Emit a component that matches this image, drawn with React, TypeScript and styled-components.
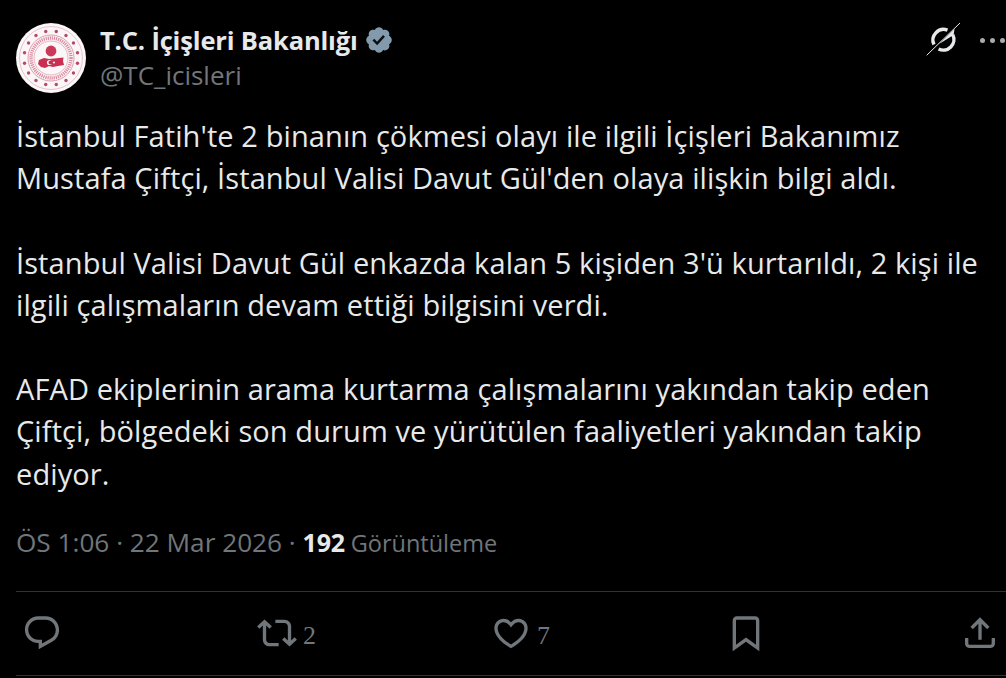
import React from "react";
import styled, { createGlobalStyle } from "styled-components";

const Global = createGlobalStyle`
  html, body { margin: 0; padding: 0; background: #000; }
  body { width: 1006px; height: 678px; overflow: hidden; }
`;

const Page = styled.main`
  width: 1006px;
  height: 678px;
  background: #000;
  overflow: hidden;
  padding: 23px 0 0 16px;
  box-sizing: border-box;
  font-family: "Open Sans", "Liberation Sans", sans-serif;
`;

const Header = styled.header`
  display: flex;
  align-items: flex-start;
  height: 70px;
`;

const Avatar = styled.div`
  width: 70px;
  height: 70px;
  flex: none;
  margin-right: 14px;
  svg { display: block; }
`;

const Identity = styled.div`
  display: flex;
  flex-direction: column;
  flex: 1;
`;

const NameRow = styled.div`
  display: flex;
  align-items: center;
  gap: 6px;
  height: 34px;
`;

const Name = styled.span`
  font-size: 25.5px;
  font-weight: 700;
  color: #e7e9ea;
  letter-spacing: -0.16px;
`;

const Handle = styled.span`
  font-size: 26px;
  line-height: 36px;
  color: #71767b;
`;

const HeaderActions = styled.div`
  display: flex;
  align-items: center;
  gap: 20px;
  height: 34px;
  margin-right: 1px;
  svg { display: block; }
`;

const Dots = styled.div`
  display: flex;
  gap: 5px;
`;

const Dot = styled.span`
  width: 5px;
  height: 5px;
  border-radius: 50%;
  background: #a8acaf;
`;

const Body = styled.div`
  margin-top: 22px;
  font-size: 29px;
  line-height: 42.2px;
  letter-spacing: 0.1px;
  color: #e7e9ea;
  white-space: pre;
`;

const Meta = styled.div`
  margin-top: 29px;
  height: 36px;
  line-height: 36px;
  font-size: 26.2px;
  color: #71767b;
  white-space: pre;
`;

const Strong = styled.span`
  font-size: 25px;
  font-weight: 700;
  color: #e7e9ea;
  letter-spacing: -0.2px;
`;

const Views = styled.span`
  font-size: 23.5px;
  margin-left: -1px;
`;

const ActionBar = styled.div`
  margin-top: 31px;
  height: 83px;
  padding-left: 6px;
  border-top: 1px solid #2f3336;
  border-bottom: 1px solid #2f3336;
  display: flex;
  align-items: center;
  justify-content: flex-start;
`;

const Action = styled.div<{ $w: number }>`
  width: ${(p) => p.$w}px;
  flex: none;
  display: flex;
  align-items: center;
  gap: 6px;
  color: #71767b;
  svg { display: block; flex: none; }
`;

const Count = styled.span`
  font-family: "Liberation Serif", serif;
  font-size: 26px;
  line-height: 24px;
  margin-top: 6px;
`;

const Seal = () => {
  const dots = Array.from({ length: 16 }, (_, i) => {
    const a = ((i + 0.5) / 16) * Math.PI * 2;
    return <circle key={i} cx={35 + 27 * Math.cos(a)} cy={35 + 27 * Math.sin(a)} r="1.7" fill="#b84a66" />;
  });
  return (
    <svg width="70" height="70" viewBox="0 0 70 70">
      <circle cx="35" cy="35" r="35" fill="#fbf6f7" />
      <circle cx="35" cy="35" r="31.5" fill="none" stroke="#e9c3cd" strokeWidth="1" />
      {dots}
      <circle cx="35" cy="35" r="23" fill="none" stroke="#d68a9c" strokeWidth="0.8" />
      <circle cx="35" cy="35" r="20" fill="none" stroke="#c9607a" strokeWidth="3.4" strokeDasharray="1.2 0.9" opacity="0.7" />
      <circle cx="35" cy="35" r="17" fill="#fbf6f7" stroke="#d68a9c" strokeWidth="0.6" />
      <circle cx="35" cy="28" r="5.4" fill="#c93a58" />
      <path d="M23 37 L28 35 L33 36 L38 35.5 L43 35 L47.5 34.5 L47 38 L48 42 L42 43 L37 44 L33 43 L29 45 L25 44 L22 41 Z" fill="#c82f50" />
      <circle cx="33.5" cy="39.5" r="2.6" fill="#fbf6f7" />
      <circle cx="34.5" cy="39.5" r="2" fill="#c82f50" />
      <circle cx="38" cy="39.5" r="1" fill="#fbf6f7" />
    </svg>
  );
};

const Badge = () => (
  <svg width="30" height="30" viewBox="0 0 22 22">
    <path fill="#829aab" d="M20.396 11c-.018-.646-.215-1.275-.57-1.816-.354-.54-.852-.972-1.438-1.246.223-.607.27-1.264.14-1.897-.131-.634-.437-1.218-.882-1.687-.47-.445-1.053-.75-1.687-.882-.633-.13-1.29-.083-1.897.14-.273-.587-.704-1.086-1.245-1.44S11.647 1.62 11 1.604c-.646.017-1.273.213-1.813.568s-.969.854-1.24 1.44c-.608-.223-1.267-.272-1.902-.14-.635.13-1.22.436-1.69.882-.445.47-.749 1.055-.878 1.688-.13.633-.08 1.29.144 1.896-.587.274-1.087.705-1.443 1.245-.356.54-.555 1.17-.574 1.817.02.647.218 1.276.574 1.817.356.54.856.972 1.443 1.245-.224.606-.274 1.263-.144 1.896.13.634.433 1.218.877 1.688.47.443 1.054.747 1.687.878.633.132 1.29.084 1.897-.136.274.586.705 1.084 1.246 1.439.54.354 1.17.551 1.816.569.647-.016 1.276-.213 1.817-.567s.972-.854 1.245-1.44c.604.239 1.266.296 1.903.164.636-.132 1.22-.447 1.68-.907.46-.46.776-1.044.908-1.681s.075-1.299-.165-1.903c.586-.274 1.084-.705 1.439-1.246.354-.54.551-1.17.569-1.816z" />
    <path fill="#0b0f14" d="M9.662 14.85l-3.429-3.428 1.293-1.302 2.072 2.072 4.4-4.794 1.347 1.246z" />
  </svg>
);

const GrokIcon = () => (
  <svg width="34" height="34" viewBox="0 0 34 34" fill="none">
    <path d="M1 32 L34 0" stroke="#e7e9ea" strokeWidth="1" strokeLinecap="round" />
    <path d="M21.5 7.2 A10.6 10.6 0 0 0 8 21.6" stroke="#e7e9ea" strokeWidth="3.4" />
    <path d="M26.8 11.8 A10.6 10.6 0 0 1 12.6 26" stroke="#e7e9ea" strokeWidth="3.4" />
    <path d="M13 21 L28.5 6 L27.6 12 Z" fill="#e7e9ea" />
  </svg>
);

const Reply = () => (
  <svg width="40" height="40" viewBox="0 0 24 24" fill="currentColor">
    <path d="M1.751 10c0-4.42 3.584-8 8.005-8h4.366c4.49 0 8.129 3.64 8.129 8.13 0 2.96-1.607 5.68-4.196 7.11l-8.054 4.46v-3.69h-.067c-4.49.1-8.183-3.51-8.183-8.01zm8.005-6c-3.317 0-6.005 2.69-6.005 6 0 3.37 2.77 6.08 6.138 6.01l.351-.01h1.761v2.3l5.087-2.81c1.951-1.08 3.163-3.13 3.163-5.36 0-3.39-2.744-6.13-6.129-6.13H9.756z" />
  </svg>
);

const Repost = () => (
  <svg width="40" height="40" viewBox="0 0 24 24" fill="currentColor">
    <path d="M4.5 3.88l4.432 4.14-1.364 1.46L5.5 7.55V16c0 1.1.896 2 2 2H13v2H7.5c-2.209 0-4-1.79-4-4V7.55L1.432 9.48.068 8.02 4.5 3.88zM16.5 6H11V4h5.5c2.209 0 4 1.79 4 4v8.45l2.068-1.93 1.364 1.46-4.432 4.14-4.432-4.14 1.364-1.46 2.068 1.93V8c0-1.1-.896-2-2-2z" />
  </svg>
);

const Heart = () => (
  <svg width="40" height="40" viewBox="0 0 24 24" fill="currentColor">
    <path d="M16.697 5.5c-1.222-.06-2.679.51-3.89 2.16l-.805 1.09-.806-1.09C9.984 6.01 8.526 5.44 7.304 5.5c-1.243.07-2.349.78-2.91 1.91-.552 1.12-.633 2.78.479 4.82 1.074 1.97 3.257 4.27 7.129 6.61 3.87-2.34 6.052-4.64 7.126-6.61 1.111-2.04 1.03-3.7.477-4.82-.561-1.13-1.666-1.84-2.908-1.91zm4.187 7.69c-1.351 2.48-4.001 5.12-8.379 7.67l-.503.3-.504-.3c-4.379-2.55-7.029-5.19-8.382-7.67-1.36-2.5-1.41-4.86-.514-6.67.887-1.79 2.647-2.91 4.601-3.01 1.651-.09 3.368.56 4.798 2.01 1.429-1.45 3.146-2.1 4.796-2.01 1.954.1 3.714 1.22 4.601 3.01.896 1.81.846 4.17-.514 6.67z" />
  </svg>
);

const Bookmark = () => (
  <svg width="40" height="40" viewBox="0 0 24 24" fill="currentColor">
    <path d="M4 4.5C4 3.12 5.119 2 6.5 2h11C18.881 2 20 3.12 20 4.5v18.44l-8-5.71-8 5.71V4.5zM6.5 4c-.276 0-.5.22-.5.5v14.56l6-4.29 6 4.29V4.5c0-.28-.224-.5-.5-.5h-11z" />
  </svg>
);

const Share = () => (
  <svg width="40" height="40" viewBox="0 0 24 24" fill="currentColor">
    <path d="M12 2.59l5.7 5.7-1.41 1.42L13 6.41V16h-2V6.41l-3.3 3.3-1.41-1.42L12 2.59zM21 15l-.02 3.51c0 1.38-1.12 2.49-2.5 2.49H5.5C4.11 21 3 19.88 3 18.5V15h2v3.5c0 .28.22.5.5.5h12.98c.28 0 .5-.22.5-.5L19 15h2z" />
  </svg>
);

const text = `İstanbul Fatih'te 2 binanın çökmesi olayı ile ilgili İçişleri Bakanımız
Mustafa Çiftçi, İstanbul Valisi Davut Gül'den olaya ilişkin bilgi aldı.

İstanbul Valisi Davut Gül enkazda kalan 5 kişiden 3'ü kurtarıldı, 2 kişi ile
ilgili çalışmaların devam ettiği bilgisini verdi.

AFAD ekiplerinin arama kurtarma çalışmalarını yakından takip eden
Çiftçi, bölgedeki son durum ve yürütülen faaliyetleri yakından takip
ediyor.`;

export default function App() {
  return (
    <Page>
      <Global />
      <Header>
        <Avatar><Seal /></Avatar>
        <Identity>
          <NameRow>
            <Name>T.C. İçişleri Bakanlığı</Name>
            <Badge />
          </NameRow>
          <Handle>@TC_icisleri</Handle>
        </Identity>
        <HeaderActions>
          <GrokIcon />
          <Dots><Dot /><Dot /><Dot /></Dots>
        </HeaderActions>
      </Header>
      <Body>{text}</Body>
      <Meta>ÖS 1:06 · 22 Mar 2026 · <Strong>192</Strong> <Views>Görüntüleme</Views></Meta>
      <ActionBar>
        <Action $w={235}><Reply /></Action>
        <Action $w={234}><Repost /><Count>2</Count></Action>
        <Action $w={235}><Heart /><Count>7</Count></Action>
        <Action $w={234}><Bookmark /></Action>
        <Action $w={40}><Share /></Action>
      </ActionBar>
    </Page>
  );
}
